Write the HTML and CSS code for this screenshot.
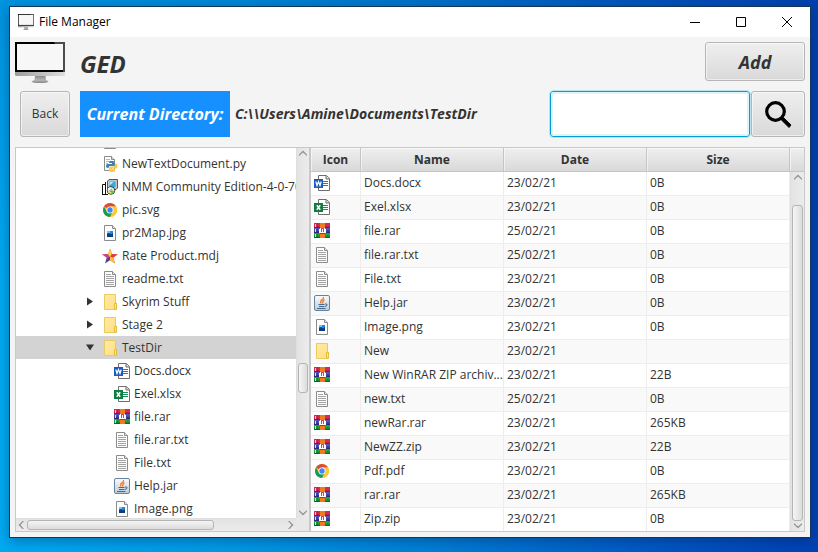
FILE: index.html
```html
<!DOCTYPE html>
<html lang="en">
<head>
<meta charset="utf-8">
<title>File Manager</title>
<link rel="stylesheet" href="styles.css">
</head>
<body>
<svg class="sprite" aria-hidden="true">
  <defs>
    <linearGradient id="chin" x1="0" x2="1" y1="0" y2="0"><stop offset="0" stop-color="#9b9b9b"/><stop offset="1" stop-color="#dedede"/></linearGradient>
    <linearGradient id="stand" x1="0" x2="0" y1="0" y2="1"><stop offset="0" stop-color="#8a8a8a"/><stop offset="0.6" stop-color="#b5b5b8"/><stop offset="1" stop-color="#85858a"/></linearGradient>
    <linearGradient id="folderFill" x1="0" x2="1" y1="0" y2="1"><stop offset="0" stop-color="#ffeaa6"/><stop offset="1" stop-color="#ffdf81"/></linearGradient>
    <linearGradient id="jarFill" x1="0" x2="0" y1="0" y2="1"><stop offset="0" stop-color="#fafcfd"/><stop offset="1" stop-color="#bccbd8"/></linearGradient>
    <linearGradient id="bandRed" x1="0" x2="0" y1="0" y2="1"><stop offset="0" stop-color="#d9284f"/><stop offset="0.6" stop-color="#d52a50"/><stop offset="1" stop-color="#7a1230"/></linearGradient>
    <linearGradient id="bandBlue" x1="0" x2="0" y1="0" y2="1"><stop offset="0" stop-color="#5d55c4"/><stop offset="0.6" stop-color="#4740a8"/><stop offset="1" stop-color="#262060"/></linearGradient>
    <linearGradient id="bandGreen" x1="0" x2="0" y1="0" y2="1"><stop offset="0" stop-color="#1fa84a"/><stop offset="0.6" stop-color="#159a3f"/><stop offset="1" stop-color="#0a5a22"/></linearGradient>
  </defs>
  <symbol id="i-monitor" viewBox="0 0 50 41" preserveAspectRatio="none">
    <path d="M0 30h50v2.500q0 1.500-1.500 1.500h-47Q0 34 0 32.500z" fill="url(#chin)"/>
    <path d="M0 0h50v30H0z" fill="#000"/>
    <path d="M39 0h11v30h-2V2h-8z" fill="#4b4b4b"/>
    <path d="M2 2h46v26H2z" fill="#f7f7f7"/>
    <path d="M20 34h10.500l.5 4q2 .5 2.500 1.500-1 1.500-8.500 1.500t-8.500-1.500Q17.500 38.500 19.500 38z" fill="url(#stand)"/>
  </symbol>
  <symbol id="i-page" viewBox="0 0 16 16">
    <path d="M2.500.5h8l3 3v12h-11z" fill="#fdfdfd" stroke="#8b8b8b"/>
    <path d="M10.500.5v3h3" fill="#e6e6e6" stroke="#8b8b8b"/>
  </symbol>
  <symbol id="i-text" viewBox="0 0 16 16">
    <use href="#i-page"/>
    <path d="M4 3.500h5M4 5.500h8M4 7.500h8M4 9.500h8M4 11.500h8M4 13.500h8" stroke="#a3a3a3"/>
  </symbol>
  <symbol id="i-image" viewBox="0 0 16 16">
    <use href="#i-page"/>
    <path d="M5 6h6v6H5z" fill="#1d8be0"/>
    <path d="M5 9l2-1 2 1.500L11 8v4H5z" fill="#0b3c7d"/>
    <path d="M5 6h3v2H5z" fill="#74c3f5"/>
  </symbol>
  <symbol id="i-folder" viewBox="0 0 16 16">
    <path d="M2.500.5h11v8.500h1v6.500h-12z" fill="url(#folderFill)" stroke="#eccb5e"/>
    <path d="M12.500 15V9.500h2V15z" fill="#ffe694" stroke="#e5bd3c"/>
  </symbol>
  <symbol id="i-word" viewBox="0 0 16 16">
    <path d="M4.500.5h8l3 3v12h-11z" fill="#fff" stroke="#6f6f6f"/>
    <path d="M12 .5V4h3.500" fill="#ddd" stroke="#6f6f6f"/>
    <path d="M9 6.500h5M9 8.500h5M9 10.500h5" stroke="#2e75c8"/>
    <path d="M0 4h9v9H0z" fill="#185abd"/>
    <path d="M1.800 6.500l1.200 4 1.500-4 1.500 4 1.200-4" fill="none" stroke="#fff" stroke-width="1.200"/>
  </symbol>
  <symbol id="i-excel" viewBox="0 0 16 16">
    <path d="M4.500.5h8l3 3v12h-11z" fill="#fff" stroke="#6f6f6f"/>
    <path d="M12 .5V4h3.500" fill="#ddd" stroke="#6f6f6f"/>
    <path d="M9 6.500h5M9 8.500h5M9 10.500h5" stroke="#1c8f56"/>
    <path d="M0 4h9v9H0z" fill="#107c41"/>
    <path d="M2.800 6.200l3.400 4.600M6.200 6.200l-3.400 4.600" stroke="#fff" stroke-width="1.500"/>
  </symbol>
  <symbol id="i-rar" viewBox="0 0 16 16">
    <path d="M0 0h16v5H0z" fill="url(#bandRed)"/>
    <path d="M0 5h16v5H0z" fill="url(#bandBlue)"/>
    <path d="M0 10h16v5H0z" fill="url(#bandGreen)"/>
    <path d="M1 1h1v3H1zM1 6h1v3H1zM1 11h1v3H1z" fill="#ffe14d"/>
    <path d="M3 0h1v15H3z" fill="#222" opacity=".25"/>
    <path d="M6 0h5v15H6z" fill="#f07a1c"/>
    <path d="M6 10h5v1H6z" fill="#a83a08"/>
    <path d="M5 5h7v5H5z" fill="#d04a24"/>
    <path d="M5 10V6h1V5h1v4h1V6h1v3h1V5h1v1h1v4z" fill="#fff"/>
  </symbol>
  <symbol id="i-chrome" viewBox="0 0 16 16">
    <circle cx="8" cy="8" r="7" fill="#fbc934"/>
    <path d="M8 8L1.940 4.500A7 7 0 0 1 14.060 4.500H8z" fill="#dd4b3e"/>
    <path d="M8 8L4.970 9.750 1.940 4.500A7 7 0 0 0 8 15l3.030-5.250z" fill="#1a9a58"/>
    <path d="M14.060 4.500A7 7 0 0 1 8 15l3.030-5.250L8 4.500z" fill="#fbc934"/>
    <circle cx="8" cy="8" r="3.500" fill="#fff"/>
    <circle cx="8" cy="8" r="2.700" fill="#4285f4"/>
  </symbol>
  <symbol id="i-jar" viewBox="0 0 16 16">
    <rect x=".5" y=".5" width="15" height="15" rx="1.500" fill="url(#jarFill)" stroke="#6583a0"/>
    <path d="M9.500 2q.5 1.500-1.500 2.800T7 8.500M10.500 4.500Q8 6 9 8.500" fill="none" stroke="#e8772a" stroke-width="1.200"/>
    <path d="M4.500 9.500h6M5 11.500h5M3 13.500h8.500M11 9q2.500-.5 2 1t-2.500 1.500" fill="none" stroke="#44688c"/>
  </symbol>
  <symbol id="i-python" viewBox="0 0 16 16">
    <path d="M2.500.5h7l3 3v11h-10z" fill="#fdfdfd" stroke="#8b8b8b"/>
    <path d="M9.500.5v3h3" fill="#e6e6e6" stroke="#8b8b8b"/>
    <path d="M4 3.500h4M4 5.500h3M4 7.500h2" stroke="#b5b5b5"/>
    <path d="M7.500 5h3.500q1.500 0 1.500 1.500V9q0 1-1.500 1H8q-1.500 0-1.500 2H5.500Q4 12 4 10t1.500-2H10V7H7z" fill="#3f7fb5"/>
    <path d="M13 7.500h1q1.500 0 1.500 2.500T14 12.500h-3.500v.5H13v1.500q0 1.500-3 1.500t-3-1.500V12q0-1.500 1.500-1.500H12q1 0 1-1.500z" fill="#fbce45"/>
  </symbol>
  <symbol id="i-installer" viewBox="0 0 16 16">
    <path d="M5.500 2L7 .5h8.500V9L14 10.500H5.500z" fill="#c4c4c4" stroke="#333" stroke-width=".8"/>
    <path d="M7 2.500h6.500v5.500H7z" fill="#35a8e0"/>
    <path d="M7.500 3h4l-4 3.500z" fill="#b9efff"/>
    <path d="M1 6h2v9H1z" fill="#fff"/>
    <path d="M.5 5.500h3M.5 5.500v9.500M3.500 3v12M0 15.500h6" fill="none" stroke="#111"/>
    <circle cx="9" cy="11.500" r="3.800" fill="#e6f2c0" stroke="#111" stroke-width=".8"/>
    <path d="M9 11.500L5.500 10.500a3.500 3.500 0 0 1 3-2.500z" fill="#fff"/>
    <path d="M9 11.500l3.300 1a3.500 3.500 0 0 1-3 2.300z" fill="#4ed23a"/>
    <path d="M9 11.500l-3.300.8a3.500 3.500 0 0 0 2.500 2.500z" fill="#e4e83a"/>
    <circle cx="9" cy="11.500" r="1" fill="#fff" stroke="#333" stroke-width=".5"/>
  </symbol>
  <symbol id="i-star" viewBox="0 0 16 16">
    <path d="M8 .5l2 5.500 6 .2-4.700 3.500L13 15.500 8 12.200z" fill="#e23b3b"/>
    <path d="M8 .5L6 6l-6 .2 4.700 3.500L8 8.500z" fill="#f3b52b"/>
    <path d="M0 6.200l6-.2 2 3-3.300.7z" fill="#c93fa0"/>
    <path d="M4.700 9.700L3 15.500l5-3.300V8.500z" fill="#5c3f99"/>
    <path d="M8 12.200l5 3.300-1.700-5.800L8 8.500z" fill="#f6c02e"/>
    <path d="M8 .5L6 6l2 3 1.800-3z" fill="#f9d24a"/>
  </symbol>
  <symbol id="i-chevron" viewBox="0 0 8 8">
    <path d="M0 5.500L4 1.500l4 4v1.500L4 3.500 0 7z" fill="#939393"/>
  </symbol>
</svg>

<main class="window">
  <header class="titlebar">
    <svg class="titlebar-icon"><use href="#i-monitor"/></svg>
    <span class="titlebar-text">File Manager</span>
    <button class="caption" aria-label="Minimize"><svg viewBox="0 0 10 10"><path d="M0 5.500h10" stroke="#000"/></svg></button>
    <button class="caption" aria-label="Maximize"><svg viewBox="0 0 10 10"><path d="M.5.5h9v9h-9z" fill="none" stroke="#000"/></svg></button>
    <button class="caption" aria-label="Close"><svg viewBox="0 0 10 10"><path d="M0 0l10 10M10 0L0 10" stroke="#000"/></svg></button>
  </header>

  <div class="brand">
    <svg class="logo"><use href="#i-monitor"/></svg>
    <h1>GED</h1>
    <button class="btn add">Add</button>
  </div>

  <form class="toolbar">
    <button class="btn back" type="button">Back</button>
    <label class="directory-label" for="path">Current Directory:</label>
    <output class="path" id="path">C:\\Users\Amine\Documents\TestDir</output>
    <input class="search" type="text" aria-label="Search">
    <button class="btn go" type="submit" aria-label="Search">
      <svg viewBox="0 0 27 27"><circle cx="10.500" cy="10.500" r="8.800" fill="none" stroke="#000" stroke-width="3.200"/><path d="M16.500 16.500l2 .2L26 24l-2 2.500-7.500-7.500z" fill="#000" stroke="#000"/></svg>
    </button>
  </form>

  <div class="panes">
    <section class="tree-pane" aria-label="Folders">
      <div class="tree-view">
        <ul class="tree">
          <li><svg class="icon"><use href="#i-text"/></svg></li>
          <li><svg class="icon"><use href="#i-python"/></svg>NewTextDocument.py</li>
          <li><svg class="icon"><use href="#i-installer"/></svg>NMM Community Edition-4-0-70</li>
          <li><svg class="icon"><use href="#i-chrome"/></svg>pic.svg</li>
          <li><svg class="icon"><use href="#i-image"/></svg>pr2Map.jpg</li>
          <li><svg class="icon"><use href="#i-star"/></svg>Rate Product.mdj</li>
          <li><svg class="icon"><use href="#i-text"/></svg>readme.txt</li>
          <li class="branch"><button class="toggle" aria-label="Expand"></button><svg class="icon"><use href="#i-folder"/></svg>Skyrim Stuff</li>
          <li class="branch"><button class="toggle" aria-label="Expand"></button><svg class="icon"><use href="#i-folder"/></svg>Stage 2</li>
          <li class="branch selected"><button class="toggle open" aria-label="Collapse"></button><svg class="icon"><use href="#i-folder"/></svg>TestDir</li>
          <li class="child"><svg class="icon"><use href="#i-word"/></svg>Docs.docx</li>
          <li class="child"><svg class="icon"><use href="#i-excel"/></svg>Exel.xlsx</li>
          <li class="child"><svg class="icon"><use href="#i-rar"/></svg>file.rar</li>
          <li class="child"><svg class="icon"><use href="#i-text"/></svg>file.rar.txt</li>
          <li class="child"><svg class="icon"><use href="#i-text"/></svg>File.txt</li>
          <li class="child"><svg class="icon"><use href="#i-jar"/></svg>Help.jar</li>
          <li class="child"><svg class="icon"><use href="#i-image"/></svg>Image.png</li>
        </ul>
      </div>
      <div class="bar vertical tree-v">
        <button class="arrow up" aria-label="Scroll up"><svg><use href="#i-chevron"/></svg></button>
        <div class="track"><div class="thumb"></div></div>
        <button class="arrow down" aria-label="Scroll down"><svg><use href="#i-chevron"/></svg></button>
      </div>
      <div class="bar horizontal">
        <button class="arrow left" aria-label="Scroll left"><svg><use href="#i-chevron"/></svg></button>
        <div class="track"><div class="thumb"></div></div>
        <button class="arrow right" aria-label="Scroll right"><svg><use href="#i-chevron"/></svg></button>
      </div>
      <div class="corner"></div>
    </section>

    <section class="table-pane" aria-label="Files">
      <table>
        <thead><tr><th class="icon-col">Icon</th><th>Name</th><th>Date</th><th>Size</th></tr></thead>
        <tbody>
          <tr><td><svg class="icon"><use href="#i-word"/></svg></td><td>Docs.docx</td><td>23/02/21</td><td>0B</td></tr>
          <tr><td><svg class="icon"><use href="#i-excel"/></svg></td><td>Exel.xlsx</td><td>23/02/21</td><td>0B</td></tr>
          <tr><td><svg class="icon"><use href="#i-rar"/></svg></td><td>file.rar</td><td>25/02/21</td><td>0B</td></tr>
          <tr><td><svg class="icon"><use href="#i-text"/></svg></td><td>file.rar.txt</td><td>25/02/21</td><td>0B</td></tr>
          <tr><td><svg class="icon"><use href="#i-text"/></svg></td><td>File.txt</td><td>23/02/21</td><td>0B</td></tr>
          <tr><td><svg class="icon"><use href="#i-jar"/></svg></td><td>Help.jar</td><td>23/02/21</td><td>0B</td></tr>
          <tr><td><svg class="icon"><use href="#i-image"/></svg></td><td>Image.png</td><td>23/02/21</td><td>0B</td></tr>
          <tr><td><svg class="icon"><use href="#i-folder"/></svg></td><td>New</td><td>23/02/21</td><td></td></tr>
          <tr><td><svg class="icon"><use href="#i-rar"/></svg></td><td>New WinRAR ZIP archiv...</td><td>23/02/21</td><td>22B</td></tr>
          <tr><td><svg class="icon"><use href="#i-text"/></svg></td><td>new.txt</td><td>25/02/21</td><td>0B</td></tr>
          <tr><td><svg class="icon"><use href="#i-rar"/></svg></td><td>newRar.rar</td><td>23/02/21</td><td>265KB</td></tr>
          <tr><td><svg class="icon"><use href="#i-rar"/></svg></td><td>NewZZ.zip</td><td>23/02/21</td><td>22B</td></tr>
          <tr><td><svg class="icon"><use href="#i-chrome"/></svg></td><td>Pdf.pdf</td><td>23/02/21</td><td>0B</td></tr>
          <tr><td><svg class="icon"><use href="#i-rar"/></svg></td><td>rar.rar</td><td>23/02/21</td><td>265KB</td></tr>
          <tr><td><svg class="icon"><use href="#i-rar"/></svg></td><td>Zip.zip</td><td>23/02/21</td><td>0B</td></tr>
        </tbody>
      </table>
      <div class="table-side">
        <div class="head-corner"></div>
        <div class="bar vertical table-v">
          <button class="arrow up" aria-label="Scroll up"><svg><use href="#i-chevron"/></svg></button>
          <div class="track"><div class="thumb"></div></div>
          <button class="arrow down" aria-label="Scroll down"><svg><use href="#i-chevron"/></svg></button>
        </div>
      </div>
    </section>
  </div>
</main>
</body>
</html>
```

FILE: styles.css
```css
* { box-sizing: border-box; }

body {
  margin: 0;
  height: 100vh;
  padding: 6px 7px 14px 9px;
  font: 12px/16px "Open Sans", "Noto Sans", sans-serif;
  color: #333;
  background:
    linear-gradient(rgba(0, 60, 150, 0.2), rgba(0, 60, 150, 0) 50%),
    linear-gradient(90deg, #00aaf2 0%, #009ae6 28%, #0080d6 52%, #0058c4 80%, #0042b4 100%);
}

button { font: inherit; color: inherit; padding: 0; }
.sprite { position: absolute; width: 0; height: 0; }

.window {
  display: flex;
  flex-direction: column;
  height: 100%;
  border: 1px solid #14365c;
  background: #f4f4f4;
  box-shadow: 0 3px 12px rgba(0, 20, 60, 0.35);
}

.titlebar {
  display: flex;
  align-items: center;
  height: 30px;
  flex: none;
  padding-left: 8px;
  background: #fff;
  color: #000;
}
.titlebar-icon { width: 16px; height: 16px; }
.titlebar-text { flex: 1; padding-left: 5px; }
.caption {
  display: grid;
  place-items: center;
  width: 46px;
  height: 100%;
  border: 0;
  background: none;
}
.caption svg { width: 10px; height: 10px; }

.btn {
  border: 1px solid #b5b5b5;
  border-radius: 3px;
  background: linear-gradient(#efefef, #d9d9d9);
  box-shadow: inset 0 0 0 1px rgba(255, 255, 255, 0.55);
}

.brand {
  display: flex;
  align-items: flex-start;
  padding: 5px 5px 0;
}
.logo { width: 50px; height: 41px; }
h1 {
  flex: 1;
  margin: 0;
  padding-left: 15px;
  font-size: 24px;
  line-height: 44px;
  font-style: italic;
}
.add {
  width: 100px;
  height: 39px;
  font-size: 18px;
  font-weight: bold;
  font-style: italic;
}

.toolbar {
  display: flex;
  height: 46px;
  flex: none;
  margin: 5px 5px 10px 10px;
  font-weight: bold;
  font-style: italic;
}
.back { width: 50px; font-weight: normal; font-style: normal; }
.directory-label {
  width: 150px;
  margin-left: 10px;
  text-align: center;
  font-size: 16px;
  line-height: 46px;
  color: #fff;
  background: #1690ff;
}
.path { flex: 1; padding-left: 5px; font-size: 14px; line-height: 46px; white-space: nowrap; }
.search {
  width: 200px;
  padding: 0 8px;
  font: inherit;
  border: 1px solid #039ed3;
  border-radius: 3px;
  outline: 1px solid #b9e3f1;
  box-shadow: inset 0 0 0 2px #e0f3f9;
  background: #fff;
}
.go { display: grid; place-items: center; width: 54px; margin-left: 1px; }
.go svg { width: 27px; height: 27px; }

.panes {
  display: flex;
  flex: 1;
  min-height: 0;
  margin: 0 5px 5px;
}
.tree-pane, .table-pane {
  border: 1px solid #c8c8c8;
  background: #fff;
  overflow: hidden;
}
.tree-pane {
  display: grid;
  grid-template: minmax(0, 1fr) 13px / minmax(0, 1fr) 13px;
  flex: 0 0 295px;
}
.tree-view { overflow: hidden; }
.tree { list-style: none; margin: -19px 0 0; padding: 0; }
.tree li {
  display: flex;
  align-items: center;
  gap: 4px;
  height: 23px;
  padding-left: 86px;
  white-space: nowrap;
}
.tree .branch { padding-left: 70px; }
.tree .child { padding-left: 98px; }
.tree .selected { background: #d3d3d3; }
.icon { width: 16px; height: 16px; flex: none; display: block; }
.toggle {
  width: 12px;
  height: 12px;
  border: 0;
  background: #333;
  clip-path: polygon(1px 2px, 7px 6px, 1px 10px);
}
.toggle.open { clip-path: polygon(0 3px, 8px 3px, 4px 9px); }

.bar { display: flex; background: linear-gradient(90deg, #e3e3e3, #ececec); }
.vertical { flex-direction: column; border-left: 1px solid #dedede; }
.horizontal { border-top: 1px solid #dedede; background: linear-gradient(#e3e3e3, #ececec); }
.corner { background: #e8e8e8; }
.arrow {
  display: grid;
  place-items: center;
  flex: none;
  border: 0;
  background: none;
}
.arrow svg { width: 8px; height: 8px; }
.vertical .arrow { height: 10px; }
.horizontal .arrow { width: 10px; }
.down svg { transform: rotate(180deg); }
.left svg { transform: rotate(-90deg); }
.right svg { transform: rotate(90deg); }
.track { display: flex; flex: 1; min-height: 0; }
.vertical .track { flex-direction: column; padding: 0 1px; }
.horizontal .track { padding: 1px 0; }
.thumb {
  border: 1px solid #b4b4b4;
  border-radius: 3px;
  background: linear-gradient(90deg, #f5f5f5, #dcdcdc);
}
.horizontal .thumb { width: 72%; margin-left: 1px; background: linear-gradient(#f5f5f5, #dcdcdc); }
.tree-v .thumb { height: 30px; margin-top: 205px; }
.table-v .thumb { flex: 1; margin-top: 23px; }

.table-pane { display: flex; align-items: flex-start; flex: 1; min-width: 0; }
table {
  width: calc(100% - 14px);
  table-layout: fixed;
  border-collapse: separate;
  border-spacing: 0;
}
th, .head-corner {
  height: 24px;
  padding: 0;
  border-right: 1px solid #c5c5c5;
  border-bottom: 1px solid #c5c5c5;
  background: linear-gradient(#efefef, #d9d9d9);
  box-shadow: inset 1px 1px 0 rgba(255, 255, 255, 0.5);
}
.icon-col { width: 50px; }
td {
  height: 24px;
  padding: 0 3px 2px;
  overflow: hidden;
  white-space: nowrap;
  border-right: 1px solid #ededed;
  border-bottom: 1px solid #ededed;
}
tbody tr:nth-child(even) { background: #f9f9f9; }
.table-side { display: flex; flex-direction: column; align-self: stretch; flex: 1; }
.head-corner { flex: none; border-right: 0; }
.table-v { flex: 1; min-height: 0; }
```
